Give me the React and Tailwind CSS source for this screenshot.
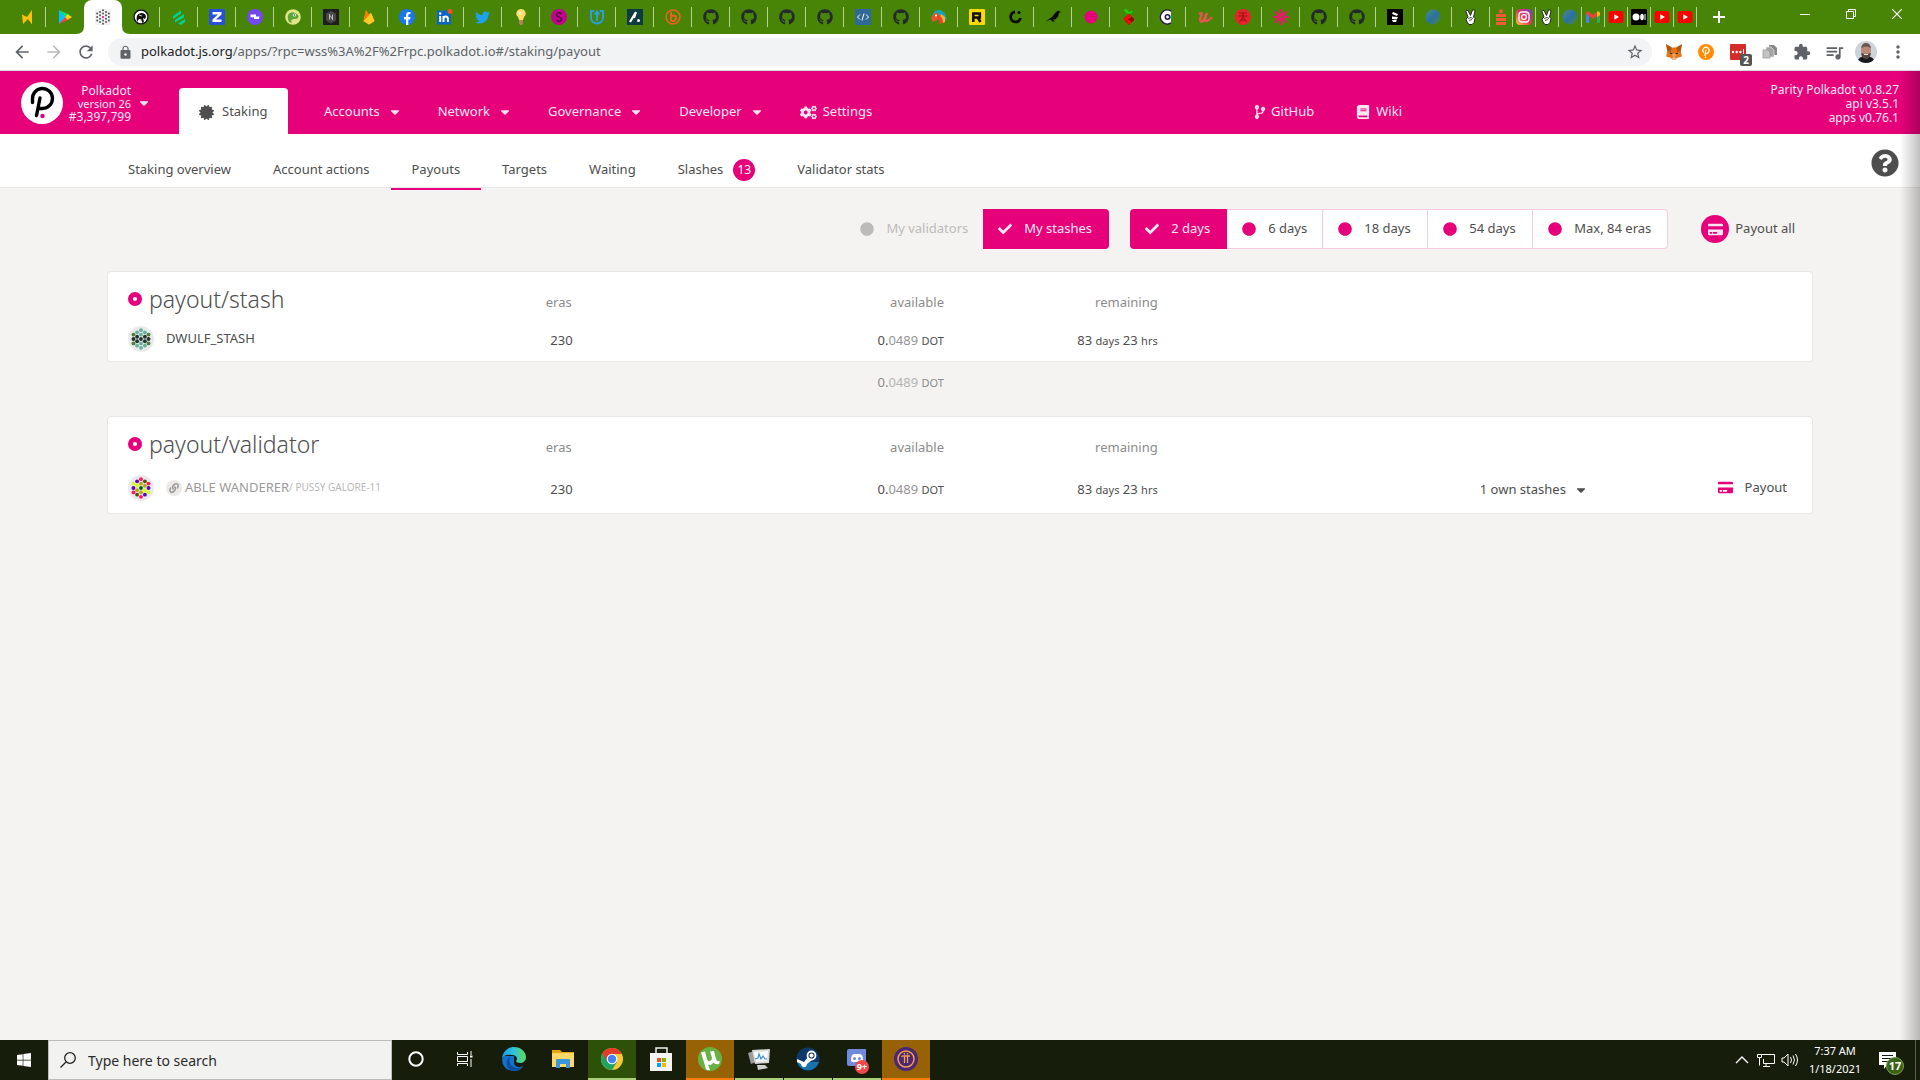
import React from "react";
import {
  FaBook, FaCaretDown, FaCertificate, FaCheck, FaCircle, FaCodeBranch, FaCogs,
  FaCreditCard, FaGithub, FaLink, FaQuestionCircle, FaTwitter, FaWindows,
} from "react-icons/fa";
import { MdArrowBack, MdArrowForward, MdRefresh, MdQueueMusic, MdMoreVert, MdLock, MdStarBorder, MdExtension } from "react-icons/md";

const S = ({ children, size = 16, vb = "0 0 16 16", className = "" }) => (
  <svg width={size} height={size} viewBox={vb} fill="none" className={"shrink-0 " + className} aria-hidden="true">{children}</svg>
);

const hex = [[8, 1.2], [5, 2.9], [11, 2.9], [8, 4.6], [2.2, 4.6], [13.8, 4.6], [5, 6.3], [11, 6.3], [8, 8], [2.2, 8], [13.8, 8], [5, 9.7], [11, 9.7], [8, 11.4], [2.2, 11.4], [13.8, 11.4], [5, 13.1], [11, 13.1], [8, 14.8]];

const Github = () => <FaGithub size={16} color="#24292e" />;
const Globe = () => (
  <S>
    <defs>
      <linearGradient id="globe" x1="0" y1="0" x2="1" y2="1"><stop offset="0" stopColor="#4a8f80" /><stop offset=".5" stopColor="#2c6fa5" /><stop offset="1" stopColor="#4a8a2a" /></linearGradient>
    </defs>
    <circle cx="8" cy="8" r="7.5" fill="url(#globe)" />
  </S>
);
const YouTube = () => <S><rect x="0.5" y="2" width="15" height="12" rx="2.5" fill="#f00" /><path d="M6.3 5.2v5.6L11 8z" fill="#fff" /></S>;
const Peace = () => (
  <S>
    <path d="M5 8L3 2.500Q3.500.5 5 1.500L7.500 6.500 9.500 1Q11.500.2 12 2L10.500 8 12 9.500 11 13.500 9 15.500H6L4 13 3 10z" fill="#fff" stroke="#1a1a1a" strokeWidth=".9" />
    <path d="M5 9.500l3-1 2 1M6 11.500l3-1" stroke="#1a1a1a" strokeWidth=".8" />
  </S>
);

const wideTabs = [
  <S key="b"><path d="M3 5.500l5 2.500L13 1v14.500L9 10 4 15z" fill="#ffc107" /></S>,
  <S key="p"><path d="M2 1v14l7-7z" fill="#00c3ff" /><path d="M2 1l11 5-4 2.500z" fill="#00e676" /><path d="M2 15l11-5-4-2.500z" fill="#ff3a44" /><path d="M10.500 5.200L15 8l-4.500 2.800L8 8z" fill="#ffd500" /></S>,
];

const moreTabs = [
  <S key="0"><circle cx="8" cy="8" r="7.500" fill="#fff" /><circle cx="8" cy="8" r="7" stroke="#111" strokeWidth="1.500" /><path d="M4 13Q2 5 8 4q5 0 5 4l-1 2-2-1 1 4-2 1q0-4-3-4z" fill="#111" /><path d="M6 6l3 1M8 10l-1 3" stroke="#ddd" strokeWidth=".9" /></S>,
  <S key="1"><path d="M2 7l8-5.500v3L2 10zM4 11l9-6v3.500l-9 5zM7 14.500l7-4.500v3l-4 3z" fill="#00d395" /></S>,
  <S key="2"><rect width="16" height="16" rx="1" fill="#2850d8" /><path d="M3.500 3h9v2.500L7 10.500h5.500V13h-9v-2.500L9 5.500H3.500z" fill="#fff" /></S>,
  <S key="3"><circle cx="8" cy="8" r="8" fill="#7448f0" /><path d="M3.500 5.500H9v2h3.500L12 10H7V8.200H3.500z" fill="#fff" /></S>,
  <S key="4"><circle cx="8" cy="8" r="7.800" fill="#e0e58b" /><path d="M4 13Q1 6 5 4t8 2q2 4-4 4l-3 1 1 3z" fill="#5fa536" /><circle cx="9.500" cy="6" r="1.500" fill="#fff" /><circle cx="9.500" cy="6" r=".7" fill="#222" /></S>,
  <S key="5"><rect width="16" height="16" fill="#1f1f1f" /><path d="M8 2l5 2.500v7L8 14.500 3 11.500v-7z" fill="#484848" /><path d="M6.500 5v5.500M9.500 5.500V11M6.500 6l3 4" stroke="#ccc" strokeWidth=".9" /></S>,
  <S key="6"><path d="M2.500 12L5 1l3 4.500L10 4l3.500 8L8 15.500z" fill="#ffa000" /><path d="M2.500 12L10 4l3.500 8L8 15.500z" fill="#ffca28" /><path d="M2.500 12L5 1l3 5z" fill="#f57c00" /></S>,
  <S key="7"><circle cx="8" cy="8" r="8" fill="#1877f2" /><path d="M7 16v-5.500H5V8h2V6.300C7 4.200 8.200 3 10 3l1.500.1v2h-1C9.600 5.100 9.300 5.700 9.300 6.400V8h2.200l-.4 2.500H9.300V16z" fill="#fff" /></S>,
  <S key="8"><rect y="1.500" width="14" height="14" fill="#0a66c2" /><path d="M3.200 7v6M6.500 7v6M6.500 10q0-2.500 2.200-2.500T10.900 10v3" stroke="#fff" strokeWidth="2" /><circle cx="3.200" cy="4.500" r="1.200" fill="#fff" /><circle cx="13" cy="2.500" r="2.500" fill="#f4511e" /></S>,
  <FaTwitter key="9" size={15} color="#1da1f2" />,
  <S key="10"><path d="M8 0a4.500 4.500 0 0 1 3 8l-1 3H6L5 8a4.500 4.500 0 0 1 3-8z" fill="#fddc6c" /><path d="M6 11h4v3l-1 2H7l-1-2z" fill="#b0855a" /><circle cx="7" cy="4" r="1.500" fill="#fff6c8" /></S>,
  <S key="11"><circle cx="8" cy="8" r="8" fill="#c4038c" /><path d="M10.500 5C9 3 5.500 3.500 5.500 5.800S10.500 8 10.500 10.300 7 13 5.500 11" stroke="#5a0a50" strokeWidth="1.800" /></S>,
  <S key="12"><path d="M5 2H2v6.500a6 6 0 0 0 12 0V2h-3" stroke="#2b9fd8" strokeWidth="2" /><path d="M8 12V3M5.500 5.500L8 2.500l2.500 3" stroke="#2b9fd8" strokeWidth="2" /></S>,
  <S key="13"><rect width="16" height="16" fill="#0d3b40" /><path d="M9 3L3 13M9 3l-2 6" stroke="#fff" strokeWidth="2.200" /><circle cx="11.500" cy="11.500" r="1.500" fill="#fff" /></S>,
  <S key="14"><circle cx="8" cy="8" r="7" stroke="#ee6123" strokeWidth="1.500" /><path d="M6 3v9M6 9q0-2.500 2.500-2.500T11 9 8.500 12 6 10" stroke="#ee6123" strokeWidth="1.800" /></S>,
  <Github key="15" />, <Github key="16" />, <Github key="17" />, <Github key="18" />,
  <S key="19"><rect width="16" height="16" fill="#306998" /><path d="M5 5.500L2.500 8 5 10.500M11 5.500L13.500 8 11 10.500M9 4.500l-2 7" stroke="#fff" /></S>,
  <Github key="20" />,
  <S key="21"><path d="M1 8Q2 1 8 1t8 9l-3 3q0-6-5-7-4 0-7 5z" fill="#1aa3b5" /><path d="M0 9q2-5 7-5l2 4-3 3-4 2z" fill="#e4572e" /><path d="M7 6q5 0 5 8l-4 1q1-4-2-5z" fill="#e8452c" /><path d="M10 5l4 3v5l-2 1q0-5-3-7z" fill="#ffb01f" /><circle cx="5" cy="6.500" r="1" fill="#fff" /></S>,
  <S key="22"><rect width="16" height="16" rx="1" fill="#ffd800" /><path d="M4.300 13V4.500h6.500v4H4.500M9 9l2.500 4" stroke="#111" strokeWidth="2.600" /></S>,
  <S key="23"><path d="M8 3a5 5 0 1 0 5.500 6" stroke="#0a0a0a" strokeWidth="2.800" /><circle cx="12" cy="3.500" r="1.500" fill="#0a0a0a" /></S>,
  <S key="24"><path d="M0 13L7 8l4-5 2-1.500 3 1.500-2 1-1 4-3 2.500H8l2 2H7l-1-2-3 1z" fill="#0a0a0a" /></S>,
  <S key="25"><circle cx="8" cy="8" r="6.500" fill="#e6007a" /></S>,
  <S key="26"><path d="M8 5Q3 4 3 0q5 0 5 4M8 5q0-4 4-3-1 3-4 3" fill="#12d212" /><path d="M8 5l5 5.500L8 16l-5-5.500z" fill="#8a0000" /><circle cx="5" cy="10" r="2.300" fill="#f20d0d" /><circle cx="8" cy="7.500" r="2.200" fill="#f20d0d" /><circle cx="8" cy="13.200" r="2.200" fill="#f20d0d" /><circle cx="11" cy="10.500" r="2" fill="#980000" /></S>,
  <S key="27"><path d="M12 2a7 7 0 1 0 0 12" fill="#fff" stroke="#2d1b4e" strokeWidth="1.500" /><circle cx="8.500" cy="8" r="2.200" stroke="#2d1b4e" strokeWidth="1.600" /><circle cx="12" cy="8" r="1.300" fill="#16a56f" /></S>,
  <S key="28"><path d="M2 5q3-2 3 0l-2 5q0 4 3 2l4-8-2 7q0 3 5-1l2-2" stroke="#ec5252" strokeWidth="2.200" /></S>,
  <S key="29"><circle cx="8" cy="8" r="8" fill="#e8232e" /><path d="M4 4h8M3.500 7h9M8 4v5M8 8l-3.500 5M8 8l3.500 5M6 11h4" stroke="#8f1414" strokeWidth="1" /></S>,
  <S key="30"><path d="M8 1v5M8 10v5M1 8h5M10 8h5M3 3l3.500 3.500M9.500 9.500L13 13M13 3L9.500 6.500M6.500 9.500L3 13" stroke="#e6196b" strokeWidth="2.300" strokeLinecap="round" /></S>,
  <Github key="31" />, <Github key="32" />,
  <S key="33"><rect width="16" height="16" fill="#000" /><path d="M6 3l5 2-1 2-5-2zM5 7.500l6 .5-1 2H5zM5 11l5-.5-1 2.500H6z" fill="#fff" /></S>,
  <Globe key="34" />,
  <Peace key="35" />,
];

const narrowTabs = [
  <S key="0"><path d="M3 6.500h10M3 10.500h10M3 14.500h10" stroke="#f15a38" strokeWidth="3" /><circle cx="8" cy="2.200" r="2" fill="#f15a38" /></S>,
  <S key="1">
    <defs><linearGradient id="insta" x1="0" y1="1" x2="1" y2="0"><stop offset="0" stopColor="#fdc94c" /><stop offset=".5" stopColor="#e8335a" /><stop offset="1" stopColor="#7a3bd0" /></linearGradient></defs>
    <rect width="16" height="16" rx="4" fill="url(#insta)" /><rect x="3" y="3" width="10" height="10" rx="3" stroke="#fff" strokeWidth="1.300" /><circle cx="8" cy="8" r="2.400" stroke="#fff" strokeWidth="1.300" /><circle cx="11" cy="5" r=".7" fill="#fff" />
  </S>,
  <Peace key="2" />,
  <Globe key="3" />,
  <S key="4"><path d="M1 4h3v10H2q-1 0-1-1z" fill="#4285f4" /><path d="M12 4h3v9q0 1-1 1h-2z" fill="#34a853" /><path d="M1 4q1-3 3-1l4 3 4-3v4L8 10 1 5z" fill="#ea4335" /><path d="M12 3q2-2 3 1v2l-3 2z" fill="#fbbc04" /></S>,
  <YouTube key="5" />,
  <S key="6"><rect width="16" height="16" rx="1" fill="#000" /><circle cx="5" cy="8" r="3.500" fill="#fff" /><ellipse cx="11" cy="8" rx="1.800" ry="3.300" fill="#fff" /><path d="M14 5v6" stroke="#fff" /></S>,
  <YouTube key="7" />,
  <YouTube key="8" />,
];

function TabStrip() {
  return (
    <div className="flex h-[34px] bg-[#488406] pl-2">
      {wideTabs.map((icon, i) => (
        <button key={i} aria-label={"Tab " + (i + 1)} className="relative flex w-[38px] shrink-0 items-center justify-center">
          {icon}
          {i === 0 && <span className="absolute right-0 h-5 w-px bg-[#b5d098]" />}
        </button>
      ))}
      <div className="relative flex w-[38px] shrink-0 items-center justify-center rounded-t-lg bg-white">
        <svg width="54" height="8" viewBox="0 0 54 8" className="absolute -left-2 bottom-0" aria-hidden="true"><path d="M0 8Q8 8 8 0h38q0 8 8 8z" fill="#fff" /></svg>
        <button aria-label="Active tab" className="relative bg-[#f1f1f1]"><S>{hex.map(([x, y], i) => <circle key={i} cx={x} cy={y} r="1" fill={i === 8 ? "#e6007a" : "#555"} />)}</S></button>
      </div>
      {moreTabs.map((icon, i) => (
        <button key={i} aria-label={"Tab " + (i + 4)} className="flex w-[38px] shrink-0 items-center">
          <span className="flex flex-1 justify-center">{icon}</span>
          <span className="h-5 w-px bg-[#b5d098]" />
        </button>
      ))}
      {narrowTabs.map((icon, i) => (
        <button key={i} aria-label={"Small tab " + (i + 1)} className="flex w-[23px] shrink-0 items-center">
          <span className="flex flex-1 justify-center">{icon}</span>
          <span className="h-5 w-px bg-[#b5d098]" />
        </button>
      ))}
      <button aria-label="New tab" className="ml-3.5 flex items-center"><S><path d="M8 2v12M2 8h12" stroke="#fff" strokeWidth="2" /></S></button>
      <div className="ml-auto flex h-7 items-center">
        <button aria-label="Minimize" className="flex w-[46px] justify-center"><S size={10} vb="0 0 10 10"><path d="M0 5.500h10" stroke="#fff" /></S></button>
        <button aria-label="Restore" className="flex w-[46px] justify-center"><S size={10} vb="0 0 10 10"><path d="M.5 2.500h7v7h-7zM2.500 2.500v-2h7v7h-2" stroke="#fff" /></S></button>
        <button aria-label="Close" className="flex w-[46px] justify-center"><S size={10} vb="0 0 10 10"><path d="M0 0l10 10M10 0L0 10" stroke="#fff" strokeWidth="1.200" /></S></button>
      </div>
    </div>
  );
}

function Toolbar() {
  return (
    <div className="flex h-[37px] items-center border-b border-[#d5d7d9] bg-white pl-3 pr-1.5 text-[#5f6368]">
      <button aria-label="Back" className="flex w-8"><MdArrowBack size={20} /></button>
      <button aria-label="Forward" className="flex w-8 text-[#babcbe]"><MdArrowForward size={20} /></button>
      <button aria-label="Reload" className="flex w-8"><MdRefresh size={20} /></button>
      <div className="flex h-7 flex-1 items-center rounded-full bg-[#f1f3f4] pl-2.5 pr-2">
        <MdLock size={15} />
        <div className="ml-2 flex-1 text-[13px]"><span className="text-[#202124]">polkadot.js.org</span>/apps/?rpc=wss%3A%2F%2Frpc.polkadot.io#/staking/payout</div>
        <button aria-label="Bookmark"><MdStarBorder size={18} /></button>
      </div>
      <div className="ml-1.5 flex items-center">
        <button aria-label="Wallet" className="flex w-8 justify-center"><S size={18}><path d="M1 1l5 3h4l5-3-1 6 1 5-4 1-2 2H7l-2-2-4-1 1-5z" fill="#e2761b" /><path d="M1 1l5 3-1 4-3-1zM15 1l-5 3 1 4 3-1z" fill="#b5560f" /><path d="M6 10l2 4 2-4-2-1z" fill="#f6a04d" /><path d="M6 13h4l-1 2H7z" fill="#d7c1b3" /><path d="M4.500 9l2 .5M11.500 9l-2 .5" stroke="#233447" /></S></button>
        <button aria-label="Polkadot extension" className="flex w-8 justify-center"><S><circle cx="8" cy="8" r="8" fill="#ff8c00" /><path d="M5.500 8.500A3.200 3.200 0 1 1 9 9.500H7M8 5.500L6.800 12" stroke="#fff" strokeWidth="1.300" /><circle cx="7.500" cy="13.300" r=".8" fill="#fff" /></S></button>
        <button aria-label="Password manager, 2 notices" className="relative flex w-8 justify-center">
          <S><rect width="16" height="16" rx="1" fill="#d32d27" /><circle cx="3" cy="8" r="1.200" fill="#fff" /><circle cx="6.700" cy="8" r="1.200" fill="#fff" /><circle cx="10.400" cy="8" r="1.200" fill="#fff" /><path d="M13.500 5v6" stroke="#fff" /></S>
          <span className="absolute left-[18px] top-2.5 flex h-3 w-3 items-center justify-center rounded-[2px] bg-[#555] text-[10px] font-bold text-white">2</span>
        </button>
        <button aria-label="Pages" className="flex w-8 justify-center"><S><path d="M7 1h5l3 3v7H7z" fill="#888" /><path d="M4 3h5l3 3v7H4z" fill="#a5a5a5" stroke="#eee" strokeWidth=".6" /><path d="M1 6h5l2 2v6H1z" fill="#c4c4c4" stroke="#999" strokeWidth=".8" /></S></button>
        <button aria-label="Extensions" className="flex w-8 justify-center"><MdExtension size={18} /></button>
        <button aria-label="Media" className="flex w-8 justify-center"><MdQueueMusic size={21} /></button>
        <button aria-label="Profile" className="flex w-8 justify-center">
          <S size={22} vb="0 0 22 22"><defs><clipPath id="av"><circle cx="11" cy="11" r="11" /></clipPath></defs><g clipPath="url(#av)"><rect width="22" height="22" fill="#cdd3da" /><path d="M2 22q1-7 9-7t9 7z" fill="#18191c" /><ellipse cx="11" cy="9.500" rx="5" ry="7" fill="#b98a76" /><path d="M6 7q1-5 5-5t5 5q-5-3-10 0z" fill="#6a554c" /><path d="M6 12q5 2 10 0-1 6-5 6t-5-6z" fill="#544640" /><path d="M9 13.500h4" stroke="#f0ddd6" /></g></S>
        </button>
        <button aria-label="Menu" className="flex w-8 justify-center"><MdMoreVert size={20} /></button>
      </div>
    </div>
  );
}

const navItems = ["Accounts", "Network", "Governance", "Developer"];

function Header() {
  return (
    <header className="flex h-[63px] bg-[#e6007a] px-[21px] text-white/90">
      <div className="flex w-[158px] shrink-0 items-center">
        <S size={42} vb="0 0 42 42">
          <circle cx="21" cy="21" r="21" fill="#fff" />
          <path d="M11.500 20.500V17.500A10 10 0 1 1 21.500 26.500H18M19 16L15.500 33.500" stroke="#000" strokeWidth="3.400" strokeLinecap="round" />
          <circle cx="21.500" cy="34" r="2.200" fill="#e6007a" />
        </S>
        <div className="flex w-[68px] flex-col items-end pt-0.5 text-[12px] leading-[14px]"><span>Polkadot</span><span className="text-[11px] leading-[12px]">version 26</span><span>#3,397,799</span></div>
        <button aria-label="Choose network" className="ml-1.5"><FaCaretDown size={14} /></button>
      </div>
      <nav className="flex h-[46px] flex-1 items-center self-end text-[13px]">
        <a href="#staking" className="flex h-full w-[109px] items-center gap-2 rounded-t bg-white pl-5 pt-0.5 text-[#4e4e4e]"><FaCertificate size={15} />Staking</a>
        {navItems.map((n) => (
          <a key={n} href={"#" + n} className="ml-9 flex items-center gap-2 pt-0.5">{n}<FaCaretDown size={14} /></a>
        ))}
        <a href="#settings" className="ml-9 flex items-center gap-1.5 pt-0.5"><FaCogs size={17} />Settings</a>
        <a href="#github" className="ml-auto flex items-center gap-1 pt-0.5"><FaCodeBranch size={14} />GitHub</a>
        <a href="#wiki" className="ml-[42px] mr-[369px] flex items-center gap-1.5 pt-0.5"><FaBook size={14} />Wiki</a>
      </nav>
      <div className="flex w-[128px] shrink-0 flex-col items-end justify-center whitespace-nowrap pt-0.5 text-[12px] leading-[14px]"><span>Parity Polkadot v0.8.27</span><span>api v3.5.1</span><span>apps v0.76.1</span></div>
    </header>
  );
}

function SubNav() {
  const tab = "flex h-full items-center border-b-2 px-[21px] pt-[18px] ";
  return (
    <div className="flex h-[54px] items-start justify-between border-b border-[#e8e7e6] bg-white pl-[107px] pr-[21px]">
      <nav className="flex h-[56px] text-[13px] text-[#4e4e4e]">
        <a href="#overview" className={tab + "border-transparent"}>Staking overview</a>
        <a href="#actions" className={tab + "border-transparent"}>Account actions</a>
        <a href="#payouts" className={tab + "border-[#e6007a]"}>Payouts</a>
        <a href="#targets" className={tab + "border-transparent"}>Targets</a>
        <a href="#waiting" className={tab + "border-transparent"}>Waiting</a>
        <a href="#slashes" className={tab + "border-transparent"}>Slashes<span className="ml-2.5 flex h-[22px] w-[22px] items-center justify-center rounded-full bg-[#e6007a] text-[12px] text-white">13</span></a>
        <a href="#stats" className={tab + "border-transparent"}>Validator stats</a>
      </nav>
      <button aria-label="Help" className="mt-[15px] text-[#4e4e4e]"><FaQuestionCircle size={28} /></button>
    </div>
  );
}

function Filters() {
  const opt = "flex h-10 items-center gap-3 whitespace-nowrap border-y border-r border-[#f8c8e0] bg-white pl-[15px] ";
  return (
    <div className="flex h-10 items-center justify-end pr-[18px] text-[13px] text-[#4e4e4e]">
      <button className="mr-[15px] flex items-center gap-3 text-[#bcbbba]"><FaCircle size={14} />My validators</button>
      <button className="flex h-10 w-[126px] items-center gap-3 rounded-r bg-[#e6007a] pl-[15px] text-white/90"><FaCheck size={14} />My stashes</button>
      <div className="ml-[21px] flex">
        <button className="flex h-10 w-[97px] items-center gap-3 rounded-l bg-[#e6007a] pl-[15px] text-white/90"><FaCheck size={14} />2 days</button>
        <button className={opt + "w-[96px]"}><FaCircle size={14} color="#e6007a" />6 days</button>
        <button className={opt + "w-[105px]"}><FaCircle size={14} color="#e6007a" />18 days</button>
        <button className={opt + "w-[105px]"}><FaCircle size={14} color="#e6007a" />54 days</button>
        <button className={opt + "w-[135px] rounded-r"}><FaCircle size={14} color="#e6007a" />Max, 84 eras</button>
      </div>
      <button className="ml-[33px] flex items-center gap-1.5"><span className="flex h-7 w-7 items-center justify-center rounded-full bg-[#e6007a] text-white/90"><FaCreditCard size={15} /></span>Payout all</button>
    </div>
  );
}

const ident = {
  a: ["#67b29c", "#67b29c", "#67b29c", "#67b29c", "#4f7d45", "#4f7d45", "#22382f", "#22382f", "#22382f", "#22382f", "#22382f", "#22382f", "#22382f", "#67b29c", "#4f7d45", "#4f7d45", "#67b29c", "#67b29c", "#67b29c"],
  b: ["#ff1a66", "#5a08b8", "#53520a", "#b7a914", "#d1ff1a", "#ff1a66", "#d1ff1a", "#b7a914", "#0c5a22", "#5a08b8", "#5a08b8", "#b7a914", "#d1ff1a", "#b7a914", "#ff1a66", "#d1ff1a", "#53520a", "#5a08b8", "#ff1a66"],
};
function Identicon({ kind }) {
  return (
    <S size={26} vb="-2 -2 20 20">
      <circle cx="8" cy="8" r="10" fill="#eaeaea" />
      {hex.map(([x, y], i) => <circle key={i} cx={x} cy={y} r="1.500" fill={ident[kind][i]} />)}
    </S>
  );
}

const Amount = () => <><span>0.</span><span className="opacity-60">0489</span> <span className="text-[11px]">DOT</span></>;

function PayoutTable({ title, children, footer }) {
  const th = "border-t border-[#e8e7e6] bg-white font-normal text-[#8b8b8b] ";
  return (
    <table className="w-full table-fixed border-separate border-spacing-0 text-[13px] text-[#4e4e4e]">
      <colgroup><col className="w-[22%]" /><col className="w-[6%]" /><col className="w-[22%]" /><col className="w-[12%]" /><col className="w-[18%]" /><col className="w-[12%]" /><col /></colgroup>
      <thead>
        <tr className="h-[46px]">
          <th className={th + "rounded-tl border-l pl-5 pt-2 text-left"}>
            <h1 className="flex items-center gap-[7px] text-[23px] font-light leading-8 text-[#4e4e4e]"><S size={14}><circle cx="8" cy="8" r="5.200" stroke="#e6007a" strokeWidth="5.600" /></S>{title}</h1>
          </th>
          <th className={th + "pr-[13px] pt-4 text-right"}>eras</th>
          <th className={th + "pr-4 pt-4 text-right"}>available</th>
          <th className={th + "pr-[7px] pt-4 text-right"}>remaining</th>
          <th className={th + "rounded-tr border-r"} colSpan={3}></th>
        </tr>
      </thead>
      <tbody>{children}</tbody>
      {footer && <tfoot><tr className="h-[42px] text-[#8b8b8b]"><td colSpan={2}></td><td className="pr-4 text-right"><Amount /></td><td colSpan={4}></td></tr></tfoot>}
    </table>
  );
}

function Row({ name, height, extra }) {
  const td = "border-b border-[#e8e7e6] bg-white ";
  const num = td + "pt-1 text-right ";
  return (
    <tr className={height}>
      <td className={td + "whitespace-nowrap rounded-bl border-l pl-5"}>{name}</td>
      <td className={num + "pr-3"}>230</td>
      <td className={num + "pr-4"}><Amount /></td>
      <td className={num + "pr-[7px]"}>83 <span className="text-[11px]">days</span> 23 <span className="text-[11px]">hrs</span></td>
      <td className={td}></td>
      <td className={td + "pl-2 pt-1"}>{extra && <button className="flex items-center gap-2">1 own stashes<FaCaretDown size={14} /></button>}</td>
      <td className={td + "rounded-br border-r pr-[25px]"}>{extra && <button className="ml-auto flex items-center gap-3"><FaCreditCard size={15} color="#e6007a" />Payout</button>}</td>
    </tr>
  );
}

function Taskbar() {
  const app = "flex h-10 w-12 items-center justify-center border-b-2 ";
  return (
    <footer className="flex h-10 items-center bg-[#161e0b] text-white">
      <button aria-label="Start" className="flex w-12 shrink-0 justify-center"><FaWindows size={16} /></button>
      <label className="flex h-10 w-[344px] shrink-0 items-center gap-3 border border-[#bcbcbb] bg-[#f2f2f1] pl-[11px] text-[#1d1d1d]">
        <S><circle cx="10" cy="6" r="5.300" stroke="#222" strokeWidth="1.300" /><path d="M6 10l-5.500 5.500" stroke="#222" strokeWidth="1.300" /></S>
        <input aria-label="Search" placeholder="Type here to search" className="w-full bg-transparent text-[14px] outline-none placeholder:text-[#2b2b2b]" />
      </label>
      <div className="flex gap-px">
        <button aria-label="Cortana" className={app + "border-transparent"}><S><circle cx="8" cy="8" r="6.700" stroke="#fff" strokeWidth="2" /></S></button>
        <button aria-label="Task view" className={app + "border-transparent"}><S><path d="M.5 1v2.500h10V1M.5 15v-2.500h10V15M.5 5.500h10v5H.5zM14 0v4M14 8v8" stroke="#fff" /><path d="M13 4.500h2.500v2H13z" fill="#fff" /></S></button>
        <button aria-label="Edge" className={app + "border-transparent"}><S size={24} vb="0 0 24 24">
          <defs>
            <linearGradient id="edge" x1="0" y1="0" x2="1" y2="0"><stop offset="0" stopColor="#1b9de2" /><stop offset=".5" stopColor="#2fc3d8" /><stop offset="1" stopColor="#5fdc5a" /></linearGradient>
          </defs>
          <path d="M1 9c-3 8 3 15 11 15 4 0 8-2 9-5-4 2-9 1-9-4V9z" fill="#1273cf" />
          <path d="M0 11C1 4 6 0 12 0c7 0 12 5 12 10 0 4-3 6-6 6-2 0-4-1-4-2 2-2 1-6-4-6-5-1-9 1-10 3z" fill="url(#edge)" />
          <path d="M9 9c-3 3-2 11 6 12 3 0 5-1 6-2-3 5-8 5.500-12 4-6-2-6-11 0-14z" fill="#0b4f9c" />
        </S></button>
        <button aria-label="File Explorer" className={app + "border-transparent"}><S size={22} vb="0 0 22 22"><path d="M0 2h8l2 2h12v15H0z" fill="#e8a50c" /><path d="M0 5h22v14H0z" fill="#ffd968" /><path d="M4 20v-8q0-1 1-1h12q1 0 1 1v8h-4v-4H8v4H4z" fill="#3b96dd" /></S></button>
        <button aria-label="Chrome" className={app + "border-[#a9d07a] bg-[#2e510a]"}><S size={24} vb="0 0 24 24"><circle cx="12" cy="12" r="11" fill="#fcc934" /><path d="M12 12L2.500 6.500A11 11 0 0 0 12 23l5-8z" fill="#1ea362" /><path d="M12 7h9.800A11 11 0 0 0 2.500 6.500L7.500 15z" fill="#e33b2e" /><circle cx="12" cy="12" r="5.300" fill="#fff" /><circle cx="12" cy="12" r="4.200" fill="#4285f4" /></S></button>
        <button aria-label="Store" className={app + "border-transparent"}><S size={24} vb="0 0 24 24"><path d="M7 6V1h11v5" stroke="#eee" strokeWidth="1.500" /><path d="M1 6h22v18H1z" fill="#f4f4f4" /><path d="M8 11h4v4H8z" fill="#f25022" /><path d="M13 11h4v4h-4z" fill="#7fba00" /><path d="M8 16h4v4H8z" fill="#00a4ef" /><path d="M13 16h4v4h-4z" fill="#ffb900" /></S></button>
        <button aria-label="uTorrent" className={app + "border-[#ff7b0a] bg-[#976106]"}><S size={24} vb="0 0 24 24"><circle cx="12" cy="12" r="12" fill="#68b245" /><path d="M3 5.500l4-1 2 7.500q1 3 3 2t2-3l-2-6.500 4-.5 2 8q1 3 4 2l-1 3q-4 1-5.500-1.500-2 3.500-5.500 2l2 5.500q-3 1-4-1z" fill="#fff" /></S></button>
        <button aria-label="Performance monitor" className={app + "border-[#a9d07a]"}><S size={24} vb="0 0 24 24"><path d="M1 6l9-3 4 10-10 4z" fill="#9c9c9c" /><path d="M5 3l18-1-1 14-14 1z" fill="#d9d9d9" /><path d="M7 5l14-1-1 10-11 1z" fill="#f6fbff" /><path d="M8 12l3-1 1-4 2 5 2-3 2 3h2" stroke="#3a8fd0" strokeWidth="1.200" /><path d="M10 18l8 0 3 3-10 2z" fill="#cfcfcf" /></S></button>
        <button aria-label="Steam" className={app + "border-[#a9d07a]"}><S size={24} vb="0 0 24 24"><circle cx="12" cy="12" r="11.500" fill="#10396b" /><path d="M1 15a11.500 11.500 0 0 0 22 0z" fill="#1673ac" /><circle cx="15.500" cy="8.500" r="4" stroke="#fff" strokeWidth="1.800" /><circle cx="15.500" cy="8.500" r="2" fill="#fff" /><path d="M1 12l7 3 4-5 4 3-5 4q-1 4-4 3-2-1-2-3l-4-2z" fill="#fff" /></S></button>
        <button aria-label="Discord, more than nine messages" className={app + "relative border-[#a9d07a]"}><S size={24} vb="0 0 24 24"><path d="M4 2h17v20l-4-3H4q-2 0-2-2V4q0-2 2-2z" fill="#7289da" /><path d="M6 14q0-7 3-7h6q3 0 3 7-2 2-4 1H10q-2 1-4-1z" fill="#fff" /><circle cx="9.500" cy="11.500" r="1.500" fill="#7289da" /><circle cx="14.500" cy="11.500" r="1.500" fill="#7289da" /></S>
          <span className="absolute bottom-1 left-[22px] flex h-[14px] w-[14px] items-center justify-center rounded-full bg-[#f04747] text-[9px] font-bold">9+</span></button>
        <button aria-label="Pi" className={app + "border-[#ff7b0a] bg-[#976106]"}><S size={24} vb="0 0 24 24"><circle cx="12" cy="12" r="12" fill="#4b2672" /><circle cx="12" cy="12" r="8" stroke="#f5a04a" strokeWidth="1.500" /><path d="M7.500 10q1-1.500 2.500-1h6M10.500 9v7M13.500 9v7M10.500 6v1.500M13.500 6v1.500" stroke="#f5a04a" strokeWidth="1.300" /></S></button>
      </div>
      <div className="ml-auto flex items-center">
        <button aria-label="Hidden icons"><S size={14} vb="0 0 14 14"><path d="M1 10l6-6 6 6" stroke="#fff" strokeWidth="1.400" /></S></button>
        <button aria-label="Network" className="ml-2"><S size={18} vb="0 0 18 18"><path d="M4.500 4.500V3.500h13v9h-11V8M9 12.500v3M6 15.500h7M.5 3.500h4v3h-4zM2.500 6.500v8" stroke="#fff" /></S></button>
        <button aria-label="Volume" className="ml-1.5"><S size={18} vb="0 0 18 18"><path d="M1 7v4h2l4 4V3L3 7zM9.500 6q2 3 0 6M12 4.500q3 4.500 0 9M14.500 3q4 6 0 12" stroke="#fff" /></S></button>
        <div className="ml-1.5 w-[60px] whitespace-nowrap text-center text-[11px] leading-[18px]">7:37 AM<br />1/18/2021</div>
        <button aria-label="17 notifications" className="relative ml-3.5 h-6 w-6"><S size={18} vb="0 0 18 18"><path d="M0 1h17v13h-9l-3 4v-4H0z" fill="#fff" /><path d="M3 4.500h11M3 7.500h11M3 10.500h7" stroke="#161e0b" /></S>
          <span className="absolute left-[7px] top-[9px] flex h-[18px] w-[18px] items-center justify-center rounded-full border border-[#7d9a5c] bg-[#3b6412] text-[11px] font-bold">17</span></button>
        <span className="ml-3 mr-1 h-10 w-px bg-[#5b6152]" />
      </div>
    </footer>
  );
}

export default function App() {
  return (
    <div className="flex min-h-screen flex-col bg-[#f4f3f1] font-['Noto_Sans','Open_Sans',sans-serif]">
      <TabStrip />
      <Toolbar />
      <div className="relative flex flex-1 flex-col">
        <Header />
        <SubNav />
        <main className="flex-1 px-[107px] pt-[21px]">
          <Filters />
          <div className="mt-[22px]">
            <PayoutTable title="payout/stash" footer>
              <Row height="h-[45px]" name={<span className="flex items-center gap-3"><Identicon kind="a" />DWULF_STASH</span>} />
            </PayoutTable>
          </div>
          <div className="mt-3">
            <PayoutTable title="payout/validator">
              <Row height="h-[52px]" extra name={<span className="flex items-center text-[#9a9a9a]"><Identicon kind="b" /><span className="ml-3 mr-[3px] flex h-4 w-4 items-center justify-center rounded-full bg-[#eceae8]"><FaLink size={10} /></span>ABLE WANDERER<span className="text-[10px] text-[#b8b8b8]">/ PUSSY GALORE-11</span></span>} />
            </PayoutTable>
          </div>
        </main>
        <div className="pointer-events-none absolute inset-y-0 right-0 w-5 bg-gradient-to-r from-transparent to-black/25" />
      </div>
      <Taskbar />
    </div>
  );
}
